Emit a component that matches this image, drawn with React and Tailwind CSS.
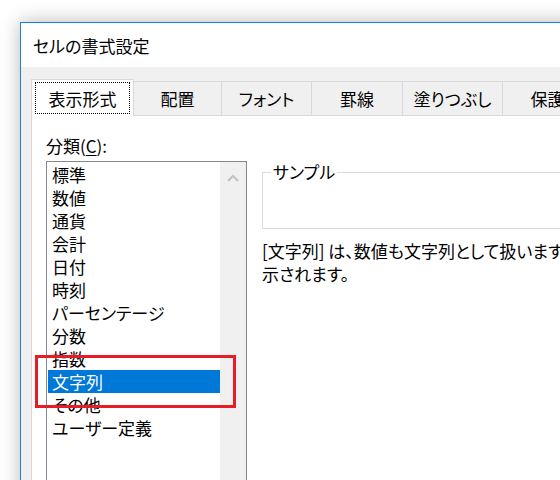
const CATEGORIES = [
  '標準',
  '数値',
  '通貨',
  '会計',
  '日付',
  '時刻',
  'パーセンテージ',
  '分数',
  '指数',
  '文字列',
  'その他',
  'ユーザー定義',
]

const OTHER_TABS = [
  { label: '配置', w: 'w-[88px]' },
  { label: 'フォント', w: 'w-[90px]' },
  { label: '罫線', w: 'w-[91px]' },
  { label: '塗りつぶし', w: 'w-[100px]' },
  { label: '保護', w: 'w-[90px]' },
]

const SELECTED = '文字列'

export default function App() {
  return (
    <div className="relative w-[560px] h-[480px] overflow-hidden bg-white text-black text-[17px] font-['Noto_Sans_CJK_JP','Noto_Sans',sans-serif] [font-feature-settings:'palt']">
      {/* Dialog window */}
      <div className="ml-[20px] mt-[22px] w-[620px] h-[520px] flex flex-col bg-white border-l border-t border-[#1883d7] shadow-[0_0_18px_rgba(0,0,0,0.28)]">
        {/* Title bar */}
        <div className="h-[44px] pl-[12px] flex items-center leading-none">セルの書式設定</div>

        {/* Body */}
        <div className="flex-1 flex flex-col bg-[#f0f0f0] pl-[10px] pt-[12px]">
          {/* Tabs */}
          <div className="flex items-end h-[36px]">
            <div className="relative z-10 w-[103px] h-[37px] -mb-px bg-white border border-b-0 border-[#d9d9d9] px-[3px] py-[2px]">
              <div className="h-full border border-dotted border-black flex items-center justify-center leading-none">
                表示形式
              </div>
            </div>
            {OTHER_TABS.map((t) => (
              <div
                key={t.label}
                className={`${t.w} h-[34px] shrink-0 flex items-center justify-center border-t border-r border-[#d9d9d9] leading-none`}
              >
                {t.label}
              </div>
            ))}
          </div>

          {/* Tab panel */}
          <div className="flex-1 flex bg-white border-t border-l border-[#d9d9d9] pl-[14px] pt-[18px]">
            {/* Category column */}
            <div className="w-[201px] shrink-0 flex flex-col">
              <div className="h-[23px] leading-[23px]">
                分類(<span className="underline underline-offset-2">C</span>):
              </div>
              <div className="mt-[4px] h-[330px] flex border border-[#828790]">
                <div className="w-[173px] pl-px pt-px">
                  {CATEGORIES.map((c) => (
                    <div
                      key={c}
                      className={`h-[23px] px-[4px] leading-[23px] whitespace-nowrap ${
                        c === SELECTED ? 'bg-[#0078d7] text-white' : ''
                      }`}
                    >
                      {c}
                    </div>
                  ))}
                </div>
                <div className="w-[26px] bg-[#f0f0f0] flex justify-center">
                  <svg width="12" height="8" viewBox="0 0 12 8" className="mt-[12px]">
                    <path d="M1 7 L6 2 L11 7" fill="none" stroke="#c2c2c2" strokeWidth="2" />
                  </svg>
                </div>
              </div>
            </div>

            {/* Sample + description */}
            <div className="ml-[15px] flex-1 flex flex-col pt-[28px]">
              <fieldset className="h-[67px] border border-[#dcdcdc] px-[8px]">
                <legend className="px-[2px] leading-[20px]">サンプル</legend>
              </fieldset>
              <div className="mt-[10px] leading-[23px] whitespace-nowrap">
                [文字列] は、数値も文字列として扱います。セルには入力したとおりに表
                <br />
                示されます。
              </div>
            </div>
          </div>
        </div>
      </div>

      {/* Red highlight annotation */}
      <div className="absolute left-[35px] top-[355px] w-[201px] h-[53px] border-[3px] border-[#e81c24]" />
    </div>
  )
}
